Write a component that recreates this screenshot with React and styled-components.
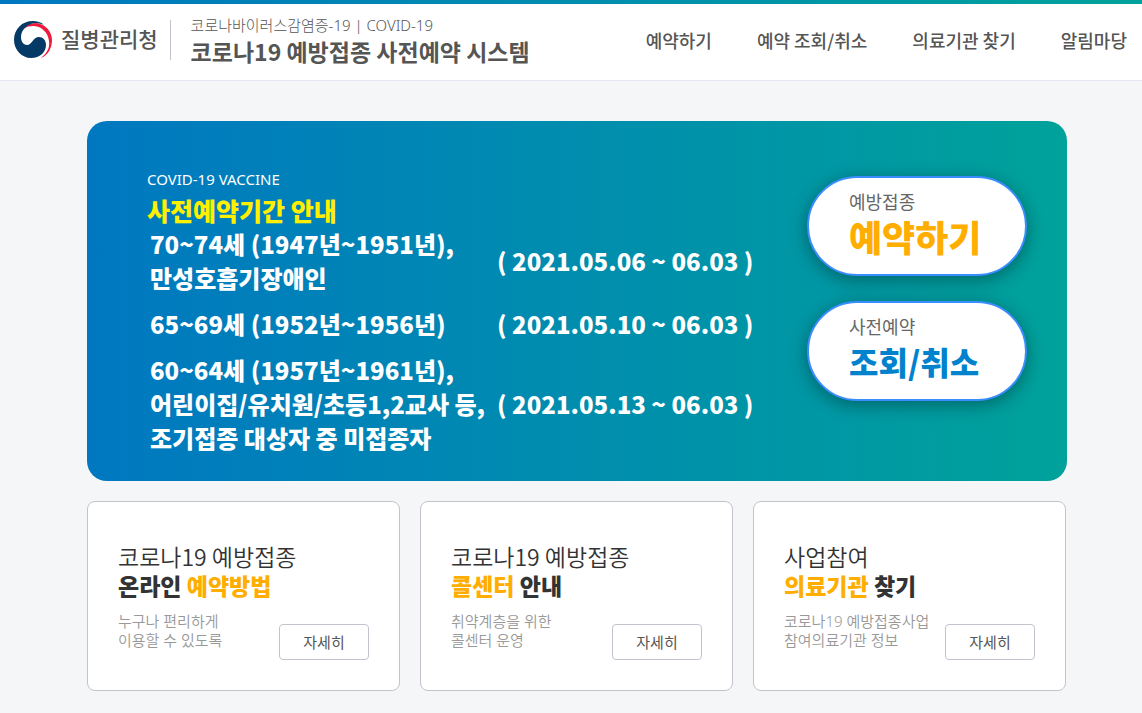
import React from 'react';
import styled, { createGlobalStyle } from 'styled-components';

const GlobalStyle = createGlobalStyle`
  * { box-sizing: border-box; }
  body {
    margin: 0;
    background: #f4f6f8;
    color: #333;
    font-family: "Noto Sans CJK KR", "Noto Sans", sans-serif;
    font-size: 15px;
  }
  h1, h2, h3, p { margin: 0; }
  p { font-family: "Noto Sans", "Noto Sans CJK KR", sans-serif; }
  a { color: inherit; text-decoration: none; }
`;

const Header = styled.header`
  display: flex;
  align-items: center;
  justify-content: space-between;
  padding: 10px 15px 14px 14px;
  background: #fff;
  border-top: 4px solid;
  border-image: linear-gradient(90deg, #0078c1, #00a29b) 1;
  border-bottom: 0;
  box-shadow: 0 1px 0 #e6e6f2;
`;

const Brand = styled.div`
  display: flex;
  align-items: center;
`;

const Logo = styled.a`
  display: flex;
  align-items: center;
  gap: 9px;
  height: 40px;
  padding-right: 12px;
  border-right: 1px solid #c3c3ce;
  color: #555;
  font-size: 21px;
  font-weight: 500;
  line-height: 30px;

  span { padding-bottom: 4px; }
`;

const SiteTitle = styled.div`
  padding-left: 20px;
  color: #555;

  p {
    font-weight: 300;
    line-height: 22px;
  }
  h1 {
    font-size: 23px;
    font-weight: 700;
    line-height: 30px;
  }
`;

const Menu = styled.nav`
  display: flex;
  gap: 45px;
  color: #555;
  font-size: 18px;
  font-weight: 500;
`;

const Main = styled.main`
  max-width: 992px;
  margin: 0 auto;
  padding: 41px 0 20px 12px;
`;

const Banner = styled.section`
  display: flex;
  justify-content: space-between;
  align-items: flex-start;
  padding: 44px 40px 26px 60px;
  border-radius: 20px;
  background: linear-gradient(90deg, #0078c1, #00a29b);
  color: #fff;
`;

const BannerLabel = styled.p`
  line-height: 28px;
`;

const BannerTitle = styled.h2`
  color: #fff000;
  font-size: 25px;
  font-weight: 900;
  line-height: 34px;
`;

const Schedule = styled.table`
  border-collapse: collapse;
  font-size: 24px;
  font-weight: 900;
  line-height: 34px;
  white-space: nowrap;

  th, td {
    padding: 0 0 12px 3px;
    text-align: left;
    font-weight: 900;
  }
  th { width: 347px; }
  tr:last-child > * { padding-bottom: 0; }
`;

const Actions = styled.div`
  display: flex;
  flex-direction: column;
  gap: 25px;
  padding-top: 11px;
`;

const Pill = styled.button`
  width: 220px;
  height: 100px;
  padding: 0 0 6px 40px;
  border: 2px solid #3a8dff;
  border-radius: 50px;
  background: #fff;
  box-shadow: 0 4px 18px rgba(0, 0, 0, 0.35);
  color: ${props => props.$color};
  font-family: inherit;
  font-size: ${props => props.$size};
  font-weight: 900;
  line-height: 44px;
  text-align: left;

  span {
    display: block;
    color: #666;
    font-size: 18px;
    font-weight: 400;
    line-height: 26px;
  }
`;

const Cards = styled.div`
  display: grid;
  grid-template-columns: repeat(3, 1fr);
  gap: 20px;
  margin-top: 20px;
  padding-right: 1px;
`;

const Card = styled.section`
  padding: 40px 30px 30px;
  border: 1px solid #c3c3ce;
  border-radius: 8px;
  background: #fff;
`;

const CardTitle = styled.h3`
  font-size: 23px;
  font-weight: 350;
  line-height: 29px;

  strong {
    display: block;
    font-weight: 900;
  }
  em {
    color: #ffae00;
    font-style: normal;
  }
`;

const CardBody = styled.div`
  display: flex;
  align-items: flex-end;
  justify-content: space-between;
  padding-top: 12px;
  white-space: nowrap;

  p {
    align-self: flex-start;
    color: #999;
    font-weight: 350;
    line-height: 19px;
  }
`;

const MoreButton = styled.button`
  width: 90px;
  height: 36px;
  margin-top: 12px;
  padding: 0 0 2px;
  border: 1px solid #c3c3ce;
  border-radius: 4px;
  background: #fff;
  color: #555;
  font-family: inherit;
  font-size: 15px;
`;

const menus = ['예약하기', '예약 조회/취소', '의료기관 찾기', '알림마당'];

const schedules = [
  { target: ['70~74세 (1947년~1951년),', '만성호흡기장애인'], period: '( 2021.05.06 ~ 06.03 )' },
  { target: ['65~69세 (1952년~1956년)'], period: '( 2021.05.10 ~ 06.03 )' },
  { target: ['60~64세 (1957년~1961년),', '어린이집/유치원/초등1,2교사 등,', '조기접종 대상자 중 미접종자'], period: '( 2021.05.13 ~ 06.03 )' },
];

const cards = [
  { top: '코로나19 예방접종', title: <>온라인 <em>예약방법</em></>, text: ['누구나 편리하게', '이용할 수 있도록'] },
  { top: '코로나19 예방접종', title: <><em>콜센터</em> 안내</>, text: ['취약계층을 위한', '콜센터 운영'] },
  { top: '사업참여', title: <><em>의료기관</em> 찾기</>, text: ['코로나19 예방접종사업', '참여의료기관 정보'] },
];

function Emblem() {
  return (
    <svg width="38" height="38" viewBox="0 0 38 38" aria-hidden="true">
      <path fill="#f0193c" d="M6 14C8 6 15 2 22 2C31 3 38 10 38 19C38 28 33 35 27 37C33 32 36 27 35 20C34 11 27 5 19 5C12 5 8 8 6 14Z" />
      <path fill="#053a66" d="M19 0C8 0 0 8 0 19C0 29 8 37 17 37C26 37 32 31 32 24C32 19 29 16 25 16C19 16 18 24 13 24C9 24 7 20 7 16C7 9 13 3 21 2C25 2 28 3 30 4C27 1 23 0 19 0Z" />
    </svg>
  )
}

function Lines({ items }) {
  return items.map((line, i) => (
    <React.Fragment key={line}>{i > 0 && <br />}{line}</React.Fragment>
  ))
}

function App() {
  return (
    <>
      <GlobalStyle />
      <Header>
        <Brand>
          <Logo href="#"><Emblem /><span>질병관리청</span></Logo>
          <SiteTitle>
            <p>코로나바이러스감염증-19 | COVID-19</p>
            <h1>코로나19 예방접종 사전예약 시스템</h1>
          </SiteTitle>
        </Brand>
        <Menu>
          {menus.map(menu => <a href="#" key={menu}>{menu}</a>)}
        </Menu>
      </Header>

      <Main>
        <Banner>
          <div>
            <BannerLabel>COVID-19 VACCINE</BannerLabel>
            <BannerTitle>사전예약기간 안내</BannerTitle>
            <Schedule>
              <tbody>
                {schedules.map(row => (
                  <tr key={row.period}>
                    <th scope="row"><Lines items={row.target} /></th>
                    <td>{row.period}</td>
                  </tr>
                ))}
              </tbody>
            </Schedule>
          </div>
          <Actions>
            <Pill $color="#ffae00" $size="36px"><span>예방접종</span>예약하기</Pill>
            <Pill $color="#0082cd" $size="32px"><span>사전예약</span>조회/취소</Pill>
          </Actions>
        </Banner>

        <Cards>
          {cards.map((card, i) => (
            <Card key={i}>
              <CardTitle>{card.top}<strong>{card.title}</strong></CardTitle>
              <CardBody>
                <p><Lines items={card.text} /></p>
                <MoreButton>자세히</MoreButton>
              </CardBody>
            </Card>
          ))}
        </Cards>
      </Main>
    </>
  )
}

export default App
